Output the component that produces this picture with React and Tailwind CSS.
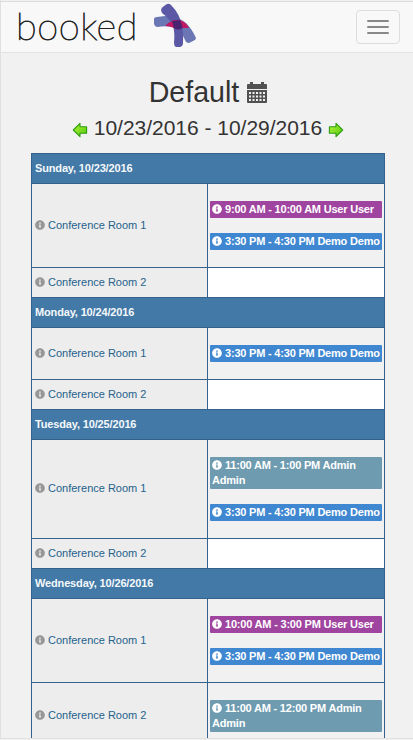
import React from 'react';
import { FaInfoCircle } from 'react-icons/fa';

const PURPLE = 'bg-[#a0459f]';
const BLUE = 'bg-[#3f87d0]';
const TEAL = 'bg-[#6e9baf]';

const days = [
  {
    label: 'Sunday, 10/23/2016',
    rooms: [
      { name: 'Conference Room 1', height: 'h-[84px]', events: [
        { text: '9:00 AM - 10:00 AM User User', color: PURPLE },
        { text: '3:30 PM - 4:30 PM Demo Demo', color: BLUE },
      ] },
      { name: 'Conference Room 2', height: 'h-[30px]', events: [] },
    ],
  },
  {
    label: 'Monday, 10/24/2016',
    rooms: [
      { name: 'Conference Room 1', height: 'h-[52px]', events: [{ text: '3:30 PM - 4:30 PM Demo Demo', color: BLUE }] },
      { name: 'Conference Room 2', height: 'h-[30px]', events: [] },
    ],
  },
  {
    label: 'Tuesday, 10/25/2016',
    rooms: [
      { name: 'Conference Room 1', height: 'h-[99px]', inset: 'pb-px', events: [
        { text: '11:00 AM - 1:00 PM Admin Admin', color: TEAL },
        { text: '3:30 PM - 4:30 PM Demo Demo', color: BLUE },
      ] },
      { name: 'Conference Room 2', height: 'h-[30px]', events: [] },
    ],
  },
  {
    label: 'Wednesday, 10/26/2016',
    rooms: [
      { name: 'Conference Room 1', height: 'h-[84px]', events: [
        { text: '10:00 AM - 3:00 PM User User', color: PURPLE },
        { text: '3:30 PM - 4:30 PM Demo Demo', color: BLUE },
      ] },
      { name: 'Conference Room 2', height: 'h-[67px]', inset: 'pb-px', events: [{ text: '11:00 AM - 12:00 PM Admin Admin', color: TEAL }] },
    ],
  },
];

function LogoMark() {
  return (
    <svg width="46" height="48" viewBox="0 0 46 48" className="block shrink-0">
      <path d="M2 16Q2 14 5 14L13 13Q25 13 34 20Q40 26 44 35Q44 37 41 38L37 40Q34 40 33 37Q30 29 24 25Q17 22 5 24Q3 24 2 21Z" fill="#6b77b5" />
      <path d="M9 7Q9 5 12 3L15 1Q17 0 19 2Q28 11 30 23Q32 31 31 40Q31 43 28 44H24Q22 43 22 40Q23 30 21 23Q17 15 10 10Z" fill="#5b59a5" />
      <path d="M13 23Q17 19 22 17L28 17Q34 19 37 25Q33 25 30 25L22 25Q18 23 13 23Z" fill="#c21863" />
      <path d="M20 18L28 17Q30 21 30.5 25Q26 28 22 25Z" fill="#4b226f" />
    </svg>
  );
}

function Arrow({ right = false }) {
  const id = right ? 'arrow-next' : 'arrow-prev';
  return (
    <svg width="16" height="16" viewBox="0 0 16 16" className={right ? 'block rotate-180' : 'block'}>
      <defs>
        <linearGradient id={id} x1="0" x2="1" y1="0" y2="1">
          <stop offset="0" stopColor={right ? '#4cc60a' : '#b8f53a'} />
          <stop offset="1" stopColor={right ? '#b8f53a' : '#4cc60a'} />
        </linearGradient>
      </defs>
      <path d="M1.3 8L8 1.3V4.8H14.6V11.2H8V14.7Z" fill={`url(#${id})`} stroke="#2f9d12" strokeWidth="1.1" strokeLinejoin="round" />
    </svg>
  );
}

function Calendar() {
  return (
    <svg width="20" height="21" viewBox="0 0 20 21" className="block">
      <path fill="#515151" fillRule="evenodd" d="M3 0H6V2H14V0H17V2H19Q20 2 20 3V7H0V3Q0 2 1 2H3ZM0 8H20V20Q20 21 19 21H1Q0 21 0 20ZM2 10V12H4V10ZM5.5 10V12H7.5V10ZM9 10V12H11V10ZM12.5 10V12H14.5V10ZM16 10V12H18V10ZM2 13.5V15.5H4V13.5ZM5.5 13.5V15.5H7.5V13.5ZM9 13.5V15.5H11V13.5ZM12.5 13.5V15.5H14.5V13.5ZM16 13.5V15.5H18V13.5ZM2 17V19H4V17ZM5.5 17V19H7.5V17ZM9 17V19H11V17ZM12.5 17V19H14.5V17ZM16 17V19H18V17Z" />
    </svg>
  );
}

function Event({ text, color }) {
  return (
    <div className={`rounded-[1px] py-px pl-[2px] text-[11px] leading-[15px] font-bold tracking-[-0.2px] text-white ${color}`}>
      <FaInfoCircle className="mr-[3px] inline-block size-[10px] align-[-1px]" />
      {text}
    </div>
  );
}

function Room({ name, height, inset = '', events }) {
  return (
    <div className={`flex border-b border-[#34628c] ${height}`}>
      <div className={`flex w-[175px] shrink-0 items-center bg-[#ededed] pl-[3px] text-[#24628b] ${inset}`}>
        <FaInfoCircle className="mr-[3px] mb-px size-[10px] text-[#979797]" />
        <span>{name}</span>
      </div>
      <div className={`flex flex-1 flex-col gap-[15px] border-l border-[#34628c] px-[2px] ${events.length ? 'bg-[#f1f1f1] pt-[17px]' : 'bg-white'}`}>
        {events.map((e) => <Event key={e.text} {...e} />)}
      </div>
    </div>
  );
}

export default function App() {
  return (
    <div className="flex h-[740px] w-[413px] flex-col overflow-hidden bg-[#f1f1f1] font-['Liberation_Sans',Arial,sans-serif] text-[#333]">
      <div className="h-[739px] overflow-hidden border-b border-l border-[#e0e0e0] pt-px">
        <nav className="flex h-[52px] items-start border-y border-t-[#dcdcdc] border-b-[#e2e2e2] bg-[#f8f8f8] pr-[13px]">
          <div className="w-[151px] shrink-0 pl-[15px] font-['Lato',sans-serif] text-[38px] leading-[46px] font-extralight tracking-[0.6px] text-[#222] [-webkit-text-stroke:0.9px_#222]">booked</div>
          <div className="pt-px"><LogoMark /></div>
          <button className="mt-[8px] ml-auto flex h-[34px] w-[44px] flex-col items-center justify-center gap-1 rounded-[4px] border border-[#ddd]">
            <span className="h-[2px] w-[22px] rounded-[1px] bg-[#888]" />
            <span className="h-[2px] w-[22px] rounded-[1px] bg-[#888]" />
            <span className="h-[2px] w-[22px] rounded-[1px] bg-[#888]" />
          </button>
        </nav>
        <div className="mt-[23px] flex h-[33px] items-center justify-center gap-[8px] pl-[2px] text-[28.6px] leading-[33px]">
          <span>Default</span>
          <Calendar />
        </div>
        <div className="mt-[7px] flex h-[24px] items-center justify-center gap-[6px] pl-[2px] text-[21px] leading-[24px]">
          <span className="pt-[3px]"><Arrow /></span>
          <span className="tracking-[-0.02px]">10/23/2016 - 10/29/2016</span>
          <span className="pt-[3px]"><Arrow right /></span>
        </div>
        <div className="mt-[13px] ml-[30px] w-[354px] border-x border-t border-[#34628c] text-[11px] leading-[15px]">
          {days.map((day) => (
            <section key={day.label}>
              <h2 className="flex h-[30px] items-center border-b border-[#34628c] bg-[#4379a6] pl-[3px] font-bold tracking-[-0.15px] text-[#f4f8fb]">{day.label}</h2>
              {day.rooms.map((room) => <Room key={room.name} {...room} />)}
            </section>
          ))}
        </div>
      </div>
    </div>
  );
}
